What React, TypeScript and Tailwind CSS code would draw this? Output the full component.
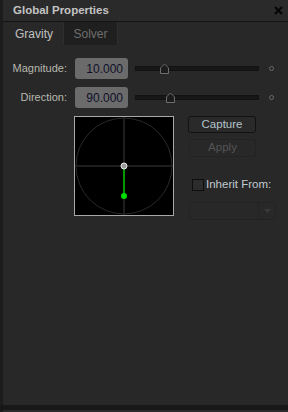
import React from "react";

const font = { fontFamily: '"Liberation Sans", Arial, sans-serif' };

function Thumb() {
  return (
    <svg width="9" height="10" viewBox="0 0 9 10" className="absolute" style={{ top: -3 }}>
      <path d="M0.5 9.5 L0.5 4 L3.5 0.8 Q4.5 0 5.5 0.8 L8.5 4 L8.5 9.5 Z" fill="#1c1c1c" stroke="#6e6e6e" strokeWidth="1" />
    </svg>
  );
}

function SliderRow({ label, value, pos }: { label: string; value: string; pos: number }) {
  return (
    <div className="flex items-center h-[21px]">
      <div className="w-[64px] text-right text-[11px] text-[#b8b8b0]">{label}</div>
      <div className="ml-[8px] w-[53px] h-[21px] rounded-[3px] bg-[#6b6b6b] flex items-center justify-end pr-[5px] text-[12px] text-[#10102a]">
        {value}
      </div>
      <div className="ml-[7px] w-[124px] h-[5px] bg-[#171717] border border-[#121212] relative">
        <div className="absolute" style={{ left: pos, top: 0 }}>
          <Thumb />
        </div>
      </div>
      <div className="ml-[10px] w-[5px] h-[5px] rounded-full border border-[#6a6a6a]" />
    </div>
  );
}

export default function App() {
  return (
    <div className="w-[288px] h-[412px] bg-[#1a1a1a] flex flex-col overflow-hidden" style={font}>
      <div className="flex h-[405px]">
        <div className="w-[3px] bg-[#1c1c1c]" />
        <div className="flex-1 bg-[#282828] flex flex-col">
          {/* Title bar */}
          <div className="h-[22px] bg-[#2a2a2a] border-b border-[#141414] flex items-center justify-between pl-[10px] pr-[4px]">
            <span className="font-bold text-[11.5px] text-[#c4c4c4]">Global Properties</span>
            <svg width="9" height="9" viewBox="0 0 9 9" className="mr-[1px]">
              <path d="M1 1 L8 8 M8 1 L1 8" stroke="#050505" strokeWidth="2" />
            </svg>
          </div>
          {/* Tabs */}
          <div className="flex h-[23px]">
            <div className="w-[60px] flex items-center pl-[12px] text-[12px] text-[#c0c0c0]">Gravity</div>
            <div className="w-[55px] bg-[#1f1f1f] border-x border-[#2e2e2e] flex items-center justify-center text-[12px] text-[#6e6e6e]">
              Solver
            </div>
          </div>
          {/* Sliders */}
          <div className="mt-[13px] flex flex-col gap-[8px]">
            <SliderRow label="Magnitude:" value="10.000" pos={24} />
            <SliderRow label="Direction:" value="90.000" pos={30} />
          </div>
          {/* Compass and buttons */}
          <div className="mt-[8px] flex">
            <div className="ml-[71px] w-[100px] h-[100px] border border-[#a8a8a8] bg-black">
              <svg width="98" height="98" viewBox="0 0 98 98">
                <circle cx="49" cy="49" r="48" fill="none" stroke="#2a2a2a" strokeWidth="1" />
                <line x1="49" y1="0" x2="49" y2="98" stroke="#1e1e1e" strokeWidth="2" />
                <line x1="0" y1="49" x2="98" y2="49" stroke="#1e1e1e" strokeWidth="2" />
                <line x1="49" y1="49" x2="49" y2="79" stroke="#009a00" strokeWidth="2" />
                <circle cx="49" cy="79" r="3" fill="#00e000" />
                <circle cx="49" cy="49" r="3" fill="#9a9a9a" stroke="#e8e8e8" strokeWidth="1" />
              </svg>
            </div>
            <div className="ml-[14px] flex flex-col">
              <div className="w-[68px] h-[17px] rounded-[3px] bg-[#2a2a2a] border border-[#121212] flex items-center justify-center text-[11.5px] text-[#b4c4cc]">
                Capture
              </div>
              <div className="mt-[6px] ml-[1px] w-[67px] h-[18px] rounded-[3px] border border-[#232323] flex items-center justify-center text-[11.5px] text-[#555555]">
                Apply
              </div>
              <div className="mt-[19px] ml-[4px] flex items-center">
                <div className="w-[12px] h-[12px] border border-[#0e0e0e] bg-[#2c2c2c]" />
                <span className="ml-[2px] text-[11.5px] text-[#c0c8d0]">Inherit From:</span>
              </div>
              <div className="mt-[9px] ml-[1px] w-[87px] h-[18px] rounded-[3px] border border-[#232323] flex justify-end">
                <div className="w-[17px] h-full border-l border-[#232323] flex items-center justify-center">
                  <svg width="7" height="4" viewBox="0 0 7 4">
                    <path d="M0 0 L7 0 L3.5 4 Z" fill="#3a3a3a" />
                  </svg>
                </div>
              </div>
            </div>
          </div>
        </div>
      </div>
      <div className="h-[5px] bg-[#181818]" />
      <div className="flex-1 bg-[#2a2a2a] ml-[3px]" />
    </div>
  );
}
